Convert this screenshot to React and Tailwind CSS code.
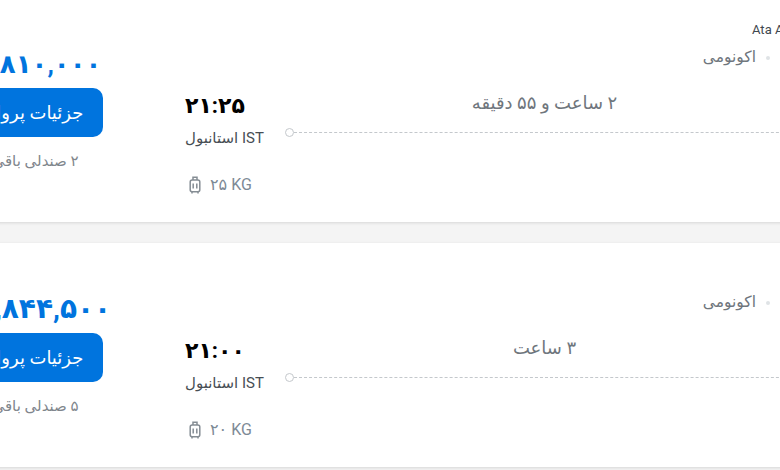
const FONT = "font-['Roboto','Noto_Sans','DejaVu_Sans',sans-serif]";

function Bag() {
  return (
    <svg width="12" height="18" viewBox="0 0 12 18" fill="none" stroke="#858d94" strokeWidth="1.5">
      <path d="M4 4V1.2h4V4" />
      <rect x="1.2" y="4" width="9.6" height="11.8" rx="2" />
      <path d="M4.2 7.5v5M7.8 7.5v5" />
      <path d="M3 16v1.4M9 16v1.4" />
    </svg>
  );
}

function Card({ price, priceClass, seats, time, duration, kg, airline }) {
  return (
    <div className="flex h-[224px] w-[891px] shrink-0 bg-white shadow-[0_1px_3px_rgba(0,0,0,0.12)]">
      <div dir="rtl" className="flex w-[243px] shrink-0 flex-col items-center border-l-2 border-[#eeeeee] pt-[53px]">
        <div className={`h-[26px] whitespace-nowrap leading-[26px] font-bold text-[#0074de] ${priceClass}`}>{price}</div>
        <div className="mt-[11px] flex h-[49px] w-[134px] items-center justify-center rounded-[10px] bg-[#0074de] text-[18px] whitespace-nowrap text-white">جزئیات پرواز</div>
        <div className="mt-[13px] text-[15px] whitespace-nowrap text-[#80868c]">{seats}</div>
      </div>
      <div className="flex min-w-0 flex-1 flex-col pl-[29px]">
        <div className="mt-[22px] h-5 pl-[567px] text-[13px] leading-5 whitespace-nowrap text-[#3f4850]">{airline}</div>
        <div className="mt-[8px] flex h-5 items-center justify-end gap-[10px] pr-[34px] text-[15.5px] text-[#6f767d]" dir="ltr">
          <span>اکونومی</span>
          <span className="h-[4px] w-[4px] rounded-full bg-[#dfe3e6]"></span>
        </div>
        <div className="mt-[25px] flex">
          <div className="w-[100px] shrink-0">
            <div className="h-[26px] text-[22px] leading-[26px] font-bold text-black" dir="ltr">{time}</div>
            <div className="mt-[9px] h-5 text-[15px] leading-5 whitespace-nowrap text-[#474e54]" dir="ltr">استانبول IST</div>
            <div className="mt-[27px] flex h-5 items-center gap-[9px] pl-[4px] text-base text-[#7d8a96]">
              <Bag />
              <span>{kg}</span>
            </div>
          </div>
          <div className="flex flex-1 flex-col">
            <div className="-mt-[1px] h-[22px] text-center text-[18px] leading-[22px] text-[#6f767d]" dir="rtl">{duration}</div>
            <div className="mt-[14px] flex items-center">
              <span className="h-[9px] w-[9px] shrink-0 rounded-full border border-[#c4c8cc]"></span>
              <span className="flex-1 border-t border-dashed border-[#c4c8cc]"></span>
            </div>
          </div>
        </div>
      </div>
    </div>
  );
}

export default function App() {
  return (
    <div className={`${FONT} h-[470px] w-[780px] overflow-hidden bg-[#f4f4f4]`}>
      <div className="-mt-[2px] -ml-[87px] flex flex-col gap-[21px]">
        <Card price="۳,۸۱۰,۰۰۰" priceClass="pl-[8px] text-[26px] tracking-[2px]" seats="۲ صندلی باقی" time="۲۱:۲۵" duration="۲ ساعت و ۵۵ دقیقه" kg="۲۵ KG" airline="Ata Airlines" />
        <Card price="۴,۸۴۴,۵۰۰" priceClass="pl-[18px] text-[28px] tracking-[3px]" seats="۵ صندلی باقی" time="۲۱:۰۰" duration="۳ ساعت" kg="۲۰ KG" airline="" />
      </div>
    </div>
  );
}
